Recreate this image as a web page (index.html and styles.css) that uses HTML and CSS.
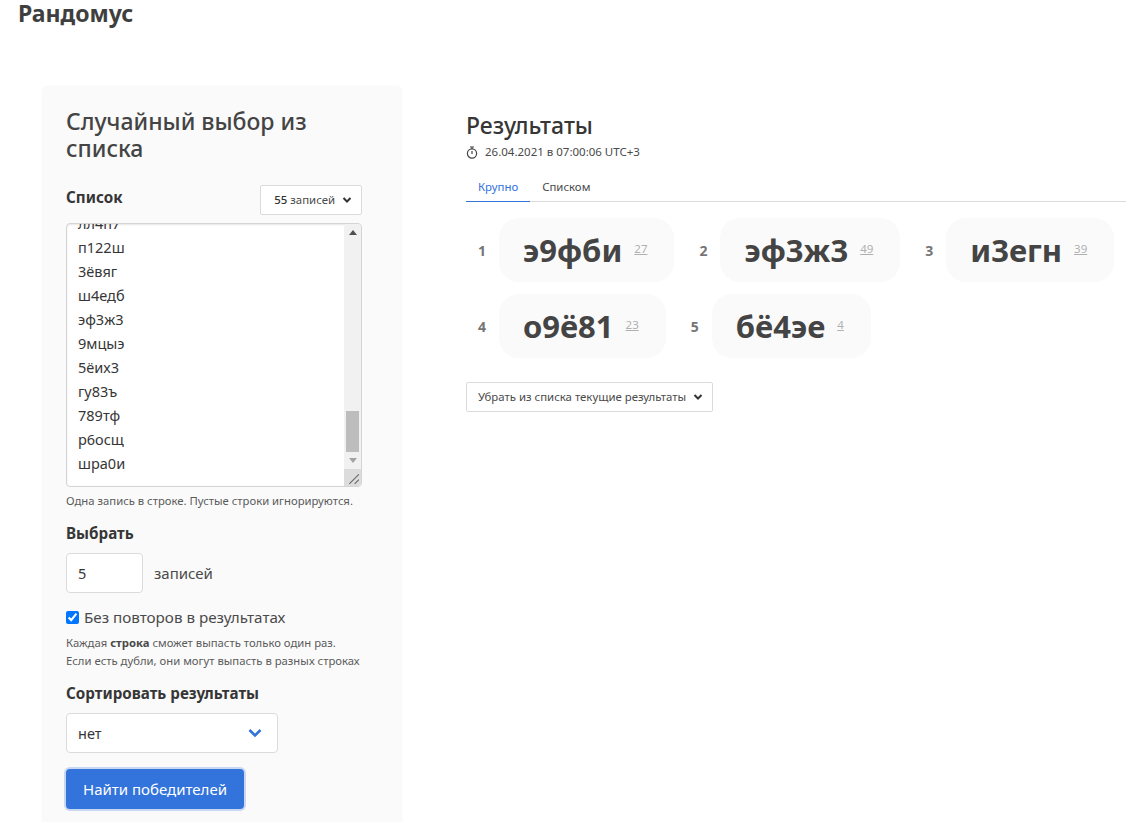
FILE: index.html
```html
<!DOCTYPE html>
<html lang="ru">
<head>
<meta charset="utf-8">
<title>Рандомус</title>
<link rel="stylesheet" href="styles.css">
</head>
<body>
<header class="topbar">Рандомус</header>
<main class="layout">
  <section class="card">
    <h1 class="card-title">Случайный выбор из списка</h1>
    <div class="list-head">
      <span class="label">Список</span>
      <button class="small-btn small-btn-count"><span><span class="count-num">55</span> записей</span>
        <svg class="chev" viewBox="0 0 10 8"><path d="M1.5 2l3.5 3.5L8.500 2" fill="none" stroke="#333" stroke-width="2"/></svg>
      </button>
    </div>
    <div class="listbox">
      <div class="listbox-text">
        <div>лл4п7</div><div>п122ш</div><div>3ёвяг</div><div>ш4едб</div><div>эф3ж3</div><div>9мцыэ</div><div>5ёих3</div><div>гу83ъ</div><div>789тф</div><div>р6осщ</div><div>шра0и</div>
      </div>
      <div class="scrollbar">
        <svg class="arrow" viewBox="0 0 8 5"><path d="M4 0l4 5H0z" fill="#505050"/></svg>
        <div class="track"><div class="thumb"></div></div>
        <svg class="arrow" viewBox="0 0 8 5"><path d="M4 5l4-5H0z" fill="#a3a3a3"/></svg>
        <div class="corner">
          <svg viewBox="0 0 16 16" class="grip"><path d="M5 14L14 5M10 14l4-4" stroke="#666" stroke-width="1" fill="none"/></svg>
        </div>
      </div>
    </div>
    <p class="hint hint-list">Одна запись в строке. Пустые строки игнорируются.</p>
    <div class="label label-pick">Выбрать</div>
    <div class="pick-row">
      <div class="field field-num">5</div>
      <span class="muted">записей</span>
    </div>
    <label class="check-row">
      <input type="checkbox" class="check" checked>
      <span>Без повторов в результатах</span>
    </label>
    <p class="hint hint-check">Каждая <b>строка</b> сможет выпасть только один раз.<br>Если есть дубли, они могут выпасть в разных строках</p>
    <div class="label label-sort">Сортировать результаты</div>
    <div class="field field-select">
      <span>нет</span>
      <svg class="chev-blue" viewBox="0 0 14 10"><path d="M1.500 2l5.500 5.500L12.500 2" fill="none" stroke="#3273dc" stroke-width="2.600"/></svg>
    </div>
    <button class="primary">Найти победителей</button>
  </section>

  <section class="results">
    <h2 class="results-title">Результаты</h2>
    <div class="stamp">
      <svg class="timer" viewBox="0 0 12 13"><circle cx="6" cy="7.500" r="4.600" fill="none" stroke="#444" stroke-width="1.200"/><path d="M4 1h4M6 1v2M6 5v3" stroke="#444" stroke-width="1.200" fill="none"/></svg>
      <span>26.04.2021 в 07:00:06 UTC+3</span>
    </div>
    <nav class="tabs">
      <span class="tab tab-active">Крупно</span>
      <span class="tab">Списком</span>
    </nav>
    <div class="winners">
      <div class="winner"><span class="rank">1</span><div class="pill"><span class="word">э9фби</span><a class="idx">27</a></div></div>
      <div class="winner"><span class="rank">2</span><div class="pill"><span class="word">эф3ж3</span><a class="idx">49</a></div></div>
      <div class="winner"><span class="rank">3</span><div class="pill"><span class="word">и3егн</span><a class="idx">39</a></div></div>
      <div class="winner"><span class="rank">4</span><div class="pill"><span class="word">о9ё81</span><a class="idx">23</a></div></div>
      <div class="winner"><span class="rank">5</span><div class="pill"><span class="word">бё4эе</span><a class="idx">4</a></div></div>
    </div>
    <button class="small-btn small-btn-remove"><span>Убрать из списка текущие результаты</span>
      <svg class="chev" viewBox="0 0 10 8"><path d="M1.500 2l3.500 3.500L8.500 2" fill="none" stroke="#333" stroke-width="2"/></svg>
    </button>
  </section>
</main>
</body>
</html>
```
FILE: styles.css
```css
* { box-sizing: border-box; }
html, body { margin: 0; height: 822px; overflow: hidden; background: #fff; }
body { font-family: "Noto Sans", "Open Sans", sans-serif; color: #4a4a4a; }

.topbar { height: 26px; padding-left: 18px; font-size: 23px; line-height: 26px; font-weight: 700; color: #3f3f3f; }

.layout { display: flex; align-items: flex-start; padding: 60px 0 0 42px; }

.card { flex: none; width: 360px; height: 736px; padding: 22px 40px 0 24px; background: #fafafa; border-radius: 6px 6px 0 0; box-shadow: 0 0 2px rgba(10,10,10,.06); }
.card-title { margin: 0 0 23px; font-size: 23px; line-height: 27px; font-weight: 500; color: #444; }

.label { font-size: 15.200px; line-height: 20px; font-weight: 700; color: #363636; }

.list-head { display: flex; justify-content: space-between; align-items: flex-start; height: 38px; }
.list-head .label { padding-top: 2px; }

.small-btn { display: inline-flex; align-items: center; height: 30px; padding: 0 9px 0 13px; background: #fff; border: 1px solid #dbdbdb; border-radius: 2px; font: 400 11.400px/1 "Noto Sans", sans-serif; color: #4a4a4a; }
.count-num { color: #333; font-weight: 500; }
.chev { width: 10px; height: 8px; margin-left: 7px; flex: none; }

.listbox { display: flex; height: 264px; background: #fff; border: 1px solid #d4d4d4; border-radius: 4px; overflow: hidden; box-shadow: inset 0 1px 2px rgba(10,10,10,.1); }
.listbox-text { flex: 1; padding: 0 11px; margin-top: -13px; font-size: 14.500px; line-height: 24px; color: #363636; }
.scrollbar { flex: none; width: 17px; display: flex; flex-direction: column; background: #f1f1f1; align-items: center; }
.arrow { flex: none; width: 8px; height: 5px; margin: 6px 0; }
.track { flex: 1; width: 100%; padding: 170px 2px 0; }
.thumb { height: 41px; background: #bdbdbd; }
.corner { flex: none; width: 17px; height: 17px; background: #dcdcdc; }
.grip { display: block; width: 17px; height: 17px; }

.hint { margin: 0; font-size: 11.300px; line-height: 18px; color: #5a5a5a; }
.hint b { font-weight: 700; color: #4a4a4a; }
.hint-list { margin-top: 5px; }

.label-pick { margin-top: 13px; }

.pick-row { display: flex; align-items: center; gap: 11px; margin-top: 10px; }
.field { background: #fff; border: 1px solid #dbdbdb; border-radius: 4px; font-size: 14.500px; color: #363636; }
.field-num { width: 77px; height: 40px; padding-left: 11px; line-height: 38px; }
.muted { font-size: 15px; color: #4a4a4a; }

.check-row { display: flex; align-items: center; gap: 5px; margin-top: 13px; font-size: 15.200px; line-height: 22px; color: #4a4a4a; }
.check { width: 13px; height: 13px; margin: 0; accent-color: #0075ff; }

.hint-check { margin-top: 6px; }

.label-sort { margin-top: 13px; }

.field-select { display: flex; justify-content: space-between; align-items: center; width: 212px; height: 40px; margin-top: 10px; padding: 0 15px 0 11px; }
.chev-blue { width: 14px; height: 10px; }

.primary { display: block; height: 40px; margin-top: 16px; padding: 0 17px; background: #3273dc; border: 0; border-radius: 4px; box-shadow: 0 0 0 2px rgba(50,115,220,.25); color: #fff; font: 400 15px/40px "Noto Sans", sans-serif; }

.results { flex: 1; min-width: 0; margin-left: 64px; padding-top: 24px; }
.results-title { margin: 0; font-size: 23px; line-height: 30px; font-weight: 500; color: #363636; }
.stamp { display: flex; align-items: center; gap: 7px; font-size: 11.500px; line-height: 16px; color: #4a4a4a; margin-top: 4px; }
.timer { width: 12px; height: 13px; flex: none; }

.tabs { display: flex; height: 27px; margin-top: 15px; border-bottom: 1px solid #dbdbdb; }
.tab { height: 27px; padding: 0 12px; font-size: 11.400px; line-height: 24px; color: #4a4a4a; }
.tab-active { color: #3273dc; border-bottom: 1px solid #3273dc; }

.winners { display: flex; flex-wrap: wrap; gap: 12px 13px; margin-top: 16px; }
.winner { display: flex; align-items: center; }
.rank { flex: none; width: 33px; padding-left: 12px; font-size: 14px; font-weight: 700; color: #757575; }
.pill { display: flex; align-items: center; gap: 12px; height: 64px; padding: 0 27px 0 24px; background: #fafafa; border-radius: 20px; }
.word { font-size: 31px; line-height: 1; font-weight: 700; color: #444; }
.idx { font-size: 11.500px; color: #b0b0b0; text-decoration: underline; position: relative; top: -2px; }

.small-btn-remove { margin-top: 24px; padding: 0 9px 0 11px; }
```
